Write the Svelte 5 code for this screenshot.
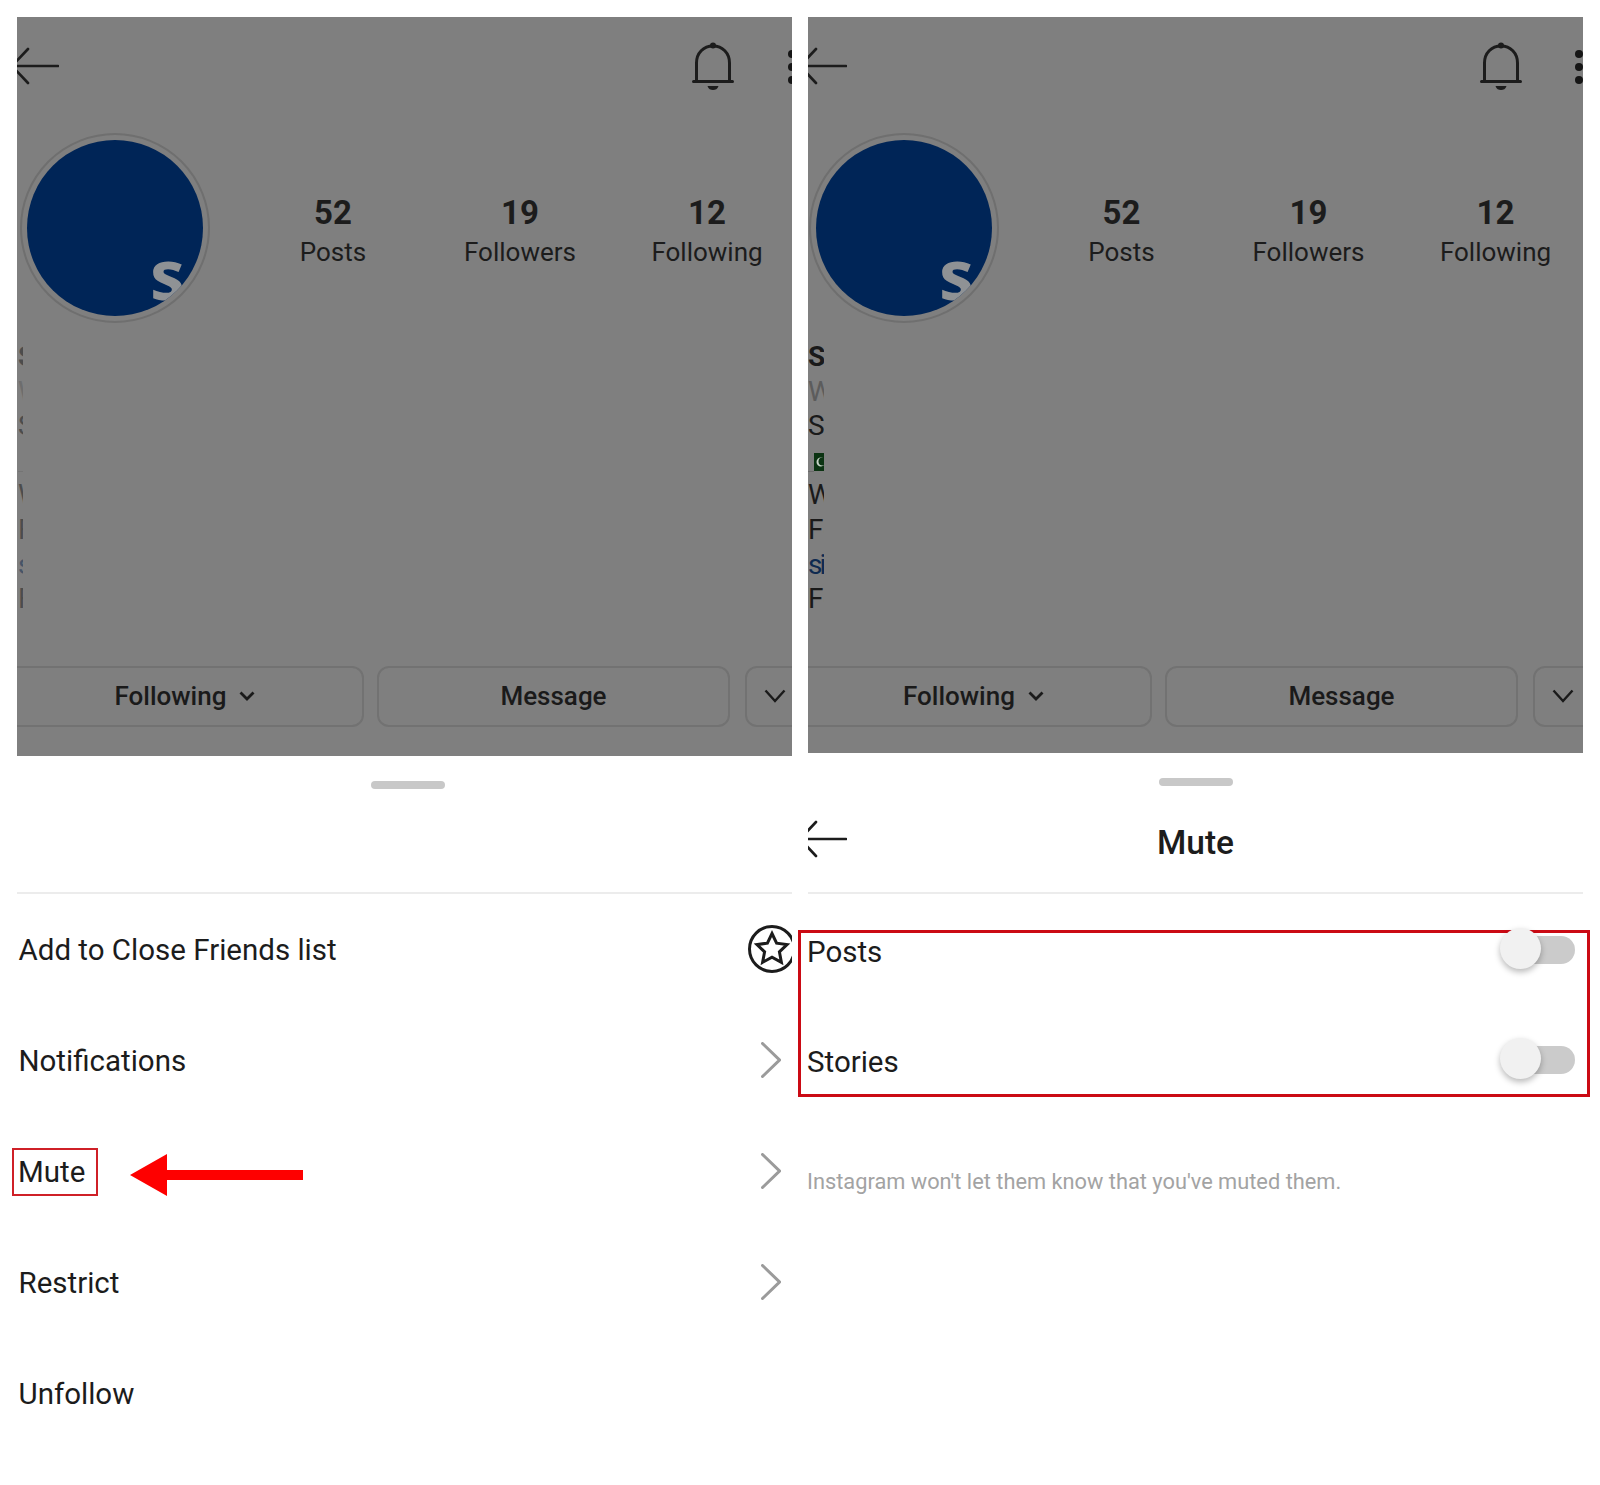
<script>
	const stats = [
		{ value: '52', label: 'Posts' },
		{ value: '19', label: 'Followers' },
		{ value: '12', label: 'Following' }
	];
	const bio = [
		{ text: 'Sa', tone: 'strong' },
		{ text: 'Wr', tone: 'muted' },
		{ text: 'Se', tone: '' },
		{ text: '', tone: 'flag' },
		{ text: 'We', tone: '' },
		{ text: 'Fo', tone: '' },
		{ text: 'si', tone: 'link' },
		{ text: 'Fo', tone: '' }
	];
	const menu = [
		{ label: 'Add to Close Friends list', icon: 'star' },
		{ label: 'Notifications', icon: 'chevron' },
		{ label: 'Mute', icon: 'chevron', marked: true },
		{ label: 'Restrict', icon: 'chevron' },
		{ label: 'Unfollow', icon: '' }
	];
	const muteOptions = ['Posts', 'Stories'];
</script>

{#snippet backArrow()}
	<svg class="back" width="47" height="38" viewBox="0 0 47 38" fill="none" stroke="#1c1c1c" stroke-width="2.6" stroke-linecap="round">
		<path d="M2 19H46" />
		<path d="M16 2 0 19 16 36" />
	</svg>
{/snippet}

{#snippet profile(side)}
	<div class="shade {side}">
		<div class="topbar">
			{@render backArrow()}
			<svg class="bell" width="42" height="48" viewBox="0 0 42 48" fill="none" stroke="#1c1c1c" stroke-width="3">
				<path d="M4.500 39V21C4.500 11 11.500 4 21 4s16.500 7 16.500 17v18" />
				<path d="M1.500 39.500h39" stroke-linecap="round" />
				<circle cx="21" cy="3.500" r="3" fill="#1c1c1c" stroke="none" />
				<path d="M15.500 44h11c-1 3-3 4-5.500 4s-4.500-1-5.500-4z" fill="#1c1c1c" stroke="none" />
			</svg>
			<div class="dots"><i></i><i></i><i></i></div>
		</div>
		<div class="identity">
			<div class="avatar"><div class="disc"><span>s</span></div></div>
			<div class="stats">
				{#each stats as stat}
					<div class="stat">
						<strong>{stat.value}</strong>
						<span>{stat.label}</span>
					</div>
				{/each}
			</div>
		</div>
		<div class="bio">
			{#each bio as line}
				<div class="bio-line {line.tone}">
					{#if line.tone === 'flag'}
						<svg width="16" height="20" viewBox="0 0 16 20">
							<rect x="6" y="1" width="10" height="18" fill="#0b3312" />
							<circle cx="13" cy="10" r="4.500" fill="#c8d4c8" />
							<circle cx="14.500" cy="9.500" r="4" fill="#0b3312" />
							<path d="M0 19.500h6" stroke="#6a6a6a" />
						</svg>
					{:else}
						{line.text}
					{/if}
				</div>
			{/each}
		</div>
		<div class="actions">
			<div class="action first">
				Following
				<svg width="16" height="10" viewBox="0 0 16 10" fill="none" stroke="#1a1a1a" stroke-width="2.8"><path d="M1.500 1.500 8 8l6.500-6.500" /></svg>
			</div>
			<div class="action second">Message</div>
			<div class="action third">
				<svg width="22" height="14" viewBox="0 0 22 14" fill="none" stroke="#1a1a1a" stroke-width="2.400"><path d="M1.500 1.500 11 12l9.500-10.500" /></svg>
			</div>
		</div>
	</div>
{/snippet}

<main class="page">
	<section class="panel">
		{@render profile('left')}
		<div class="sheet-head tall">
			<div class="handle"></div>
		</div>
		<div class="menu">
			{#each menu as item}
				<div class="row" class:clip={item.icon === 'star'}>
					<div class="row-label">
						{#if item.marked}
							<span class="marked">{item.label}</span>
							<svg class="pointer" width="173" height="42" viewBox="0 0 173 42">
								<path d="M0 21 37 0V16H173V26H37V42z" fill="#fe0000" />
							</svg>
						{:else}
							{item.label}
						{/if}
					</div>
					{#if item.icon === 'star'}
						<svg class="star" width="48" height="48" viewBox="0 0 48 48" fill="none" stroke="#1c1c1c" stroke-width="3">
							<circle cx="24" cy="24" r="22.500" />
							<path d="M24 8.500l4.600 9.700 10.400 1.300-7.600 7.300 2 10.500-9.400-5.100-9.400 5.100 2-10.500-7.600-7.300 10.400-1.300z" />
						</svg>
					{:else if item.icon === 'chevron'}
						<svg class="chevron" width="20" height="36" viewBox="0 0 20 36" fill="none" stroke="#9b9b9b" stroke-width="3" stroke-linecap="round">
							<path d="M1.500 1.500 18.500 18 1.500 34.500" />
						</svg>
					{/if}
				</div>
			{/each}
		</div>
	</section>

	<section class="panel">
		{@render profile('right')}
		<div class="sheet-head">
			<div class="handle"></div>
			<div class="title-bar">
				{@render backArrow()}
				<h2>Mute</h2>
			</div>
		</div>
		<div class="mute-box">
			{#each muteOptions as option}
				<div class="mute-row">
					<span>{option}</span>
					<div class="toggle"><div class="knob"></div></div>
				</div>
			{/each}
		</div>
		<p class="hint">Instagram won't let them know that you've muted them.</p>
	</section>
</main>

<style>
	:global(body) {
		margin: 0;
		background: #fff;
	}

	.page {
		display: flex;
		gap: 16px;
		padding: 17px 17px 0;
		height: 1468px;
		font-family: Roboto, 'Liberation Sans', sans-serif;
		color: #1c1c1c;
		overflow: hidden;
	}

	.panel {
		width: 775px;
		flex: none;
	}

	.shade {
		background: #7f7f7f;
		overflow: hidden;
		height: 739px;
	}

	.shade.right {
		height: 736px;
	}

	.topbar {
		display: flex;
		align-items: flex-start;
		height: 100px;
		padding-top: 30px;
		box-sizing: border-box;
	}

	.back {
		flex: none;
		margin-left: -5px;
	}

	.shade.right .back {
		margin-left: -8px;
	}

	.bell {
		margin-left: 633px;
		margin-top: -5px;
		flex: none;
	}

	.shade.right .bell {
		margin-left: 633px;
	}

	.dots {
		display: flex;
		flex-direction: column;
		gap: 5px;
		margin-left: 54px;
		margin-top: 3px;
		flex: none;
	}

	.shade.right .dots {
		margin-left: 53px;
	}

	.dots i {
		display: block;
		width: 8px;
		height: 8px;
		border-radius: 50%;
		background: #161616;
	}

	.identity {
		display: flex;
		margin-top: 16px;
		padding-left: 3px;
	}

	.shade.right .identity {
		padding-left: 1px;
	}

	.avatar {
		width: 190px;
		height: 190px;
		flex: none;
		box-sizing: border-box;
		border: 2px solid #6f6f6f;
		border-radius: 50%;
		padding: 5px;
	}

	.disc {
		width: 100%;
		height: 100%;
		border-radius: 50%;
		background: #002557;
		overflow: hidden;
		position: relative;
	}

	.disc span {
		position: absolute;
		left: 123px;
		top: 98px;
		font: 700 70px/1 'Open Sans', sans-serif;
		color: #8f9295;
	}

	.stats {
		display: grid;
		grid-template-columns: repeat(3, 187px);
		margin-left: 29.500px;
		padding-top: 61px;
	}

	.shade.right .stats {
		margin-left: 29px;
	}

	.stat {
		display: flex;
		flex-direction: column;
		align-items: center;
	}

	.stat strong {
		font-size: 33px;
		font-weight: 700;
		line-height: 38px;
	}

	.stat span {
		font-size: 26px;
		line-height: 34px;
		margin-top: 3px;
	}

	.bio {
		width: 5px;
		overflow: hidden;
		margin-top: 17px;
		padding-left: 1px;
	}

	.shade.right .bio {
		width: 16px;
		padding-left: 0;
	}

	.bio-line {
		font-size: 28px;
		line-height: 34.600px;
		height: 34.600px;
		white-space: nowrap;
		color: #1a1a1a;
	}

	.shade.left .bio-line {
		opacity: 0.5;
	}

	.bio-line.strong {
		font-weight: 700;
	}

	.bio-line.muted {
		color: #5c5c5c;
	}

	.bio-line.link {
		color: #0e2a50;
		letter-spacing: -3px;
	}

	.bio-line.flag {
		box-sizing: border-box;
		padding-top: 8px;
	}

	.bio-line.flag svg {
		display: block;
	}

	.actions {
		display: flex;
		margin-top: 49px;
	}

	.action {
		flex: none;
		display: flex;
		align-items: center;
		justify-content: center;
		gap: 13px;
		height: 61px;
		box-sizing: border-box;
		border: 2px solid #727272;
		border-radius: 12px;
		font-size: 26px;
		font-weight: 500;
		color: #1a1a1a;
	}

	.action.first {
		width: 367px;
		margin-left: -20px;
		padding-left: 9px;
	}

	.action.second {
		width: 353px;
		margin-left: 13px;
	}

	.action.third {
		width: 90px;
		margin-left: 15px;
		justify-content: flex-start;
		padding-left: 17px;
	}

	.shade.right .action.first {
		margin-left: -23px;
		padding-left: 10px;
	}

	.sheet-head {
		height: 141px;
		box-sizing: border-box;
		padding-top: 25px;
		border-bottom: 2px solid #ececec;
		overflow: hidden;
	}

	.sheet-head.tall {
		height: 138px;
	}

	.handle {
		width: 74px;
		height: 8px;
		border-radius: 4px;
		background: #c8c8c8;
		margin-left: 354px;
	}

	.sheet-head:not(.tall) .handle {
		margin-left: 351px;
	}

	.title-bar {
		display: flex;
		align-items: center;
		margin-top: 33px;
		height: 40px;
	}

	.title-bar .back {
		margin-left: -8px;
	}

	h2 {
		flex: 1;
		margin: 0 0 -6px -39px;
		text-align: center;
		font-size: 33.500px;
		font-weight: 500;
		color: #1c1c1c;
	}

	.row {
		display: flex;
		align-items: center;
		justify-content: space-between;
		height: 111px;
		padding: 0 11px 0 1.500px;
		font-size: 29.500px;
		color: #1c1c1c;
	}

	.row.clip {
		overflow: hidden;
	}

	.row-label {
		display: flex;
		align-items: center;
	}

	.marked {
		display: block;
		box-sizing: border-box;
		width: 86px;
		height: 48px;
		line-height: 44px;
		margin-left: -6.500px;
		padding-left: 4px;
		border: 2px solid #cf2027;
	}

	.pointer {
		margin-left: 32px;
		margin-top: 6px;
	}

	.chevron {
		margin-top: -2px;
	}

	.star {
		flex: none;
		margin-right: -15px;
		margin-top: -2px;
	}

	.mute-box {
		margin: 36px -7px 0 -10px;
		padding: 0 12px 0 6px;
		border: 3px solid #cb0a14;
		height: 167px;
		box-sizing: border-box;
	}

	.mute-row {
		display: flex;
		justify-content: space-between;
		align-items: flex-start;
		height: 38px;
		line-height: 38px;
		font-size: 29.500px;
		margin-bottom: 72px;
	}

	.mute-row:last-child {
		margin-bottom: 0;
	}

	.toggle {
		position: relative;
		width: 65px;
		height: 28px;
		margin-top: 3px;
		border-radius: 14px;
		background: #cbcbcb;
	}

	.knob {
		position: absolute;
		left: -10px;
		top: -8px;
		width: 41px;
		height: 41px;
		border-radius: 50%;
		background: #f1f1f1;
		box-shadow: 0 3px 6px rgba(0, 0, 0, 0.28);
	}

	.hint {
		margin: 67px 0 0 -1px;
		font-size: 21.800px;
		line-height: 36px;
		color: #a3a3a3;
	}
</style>
